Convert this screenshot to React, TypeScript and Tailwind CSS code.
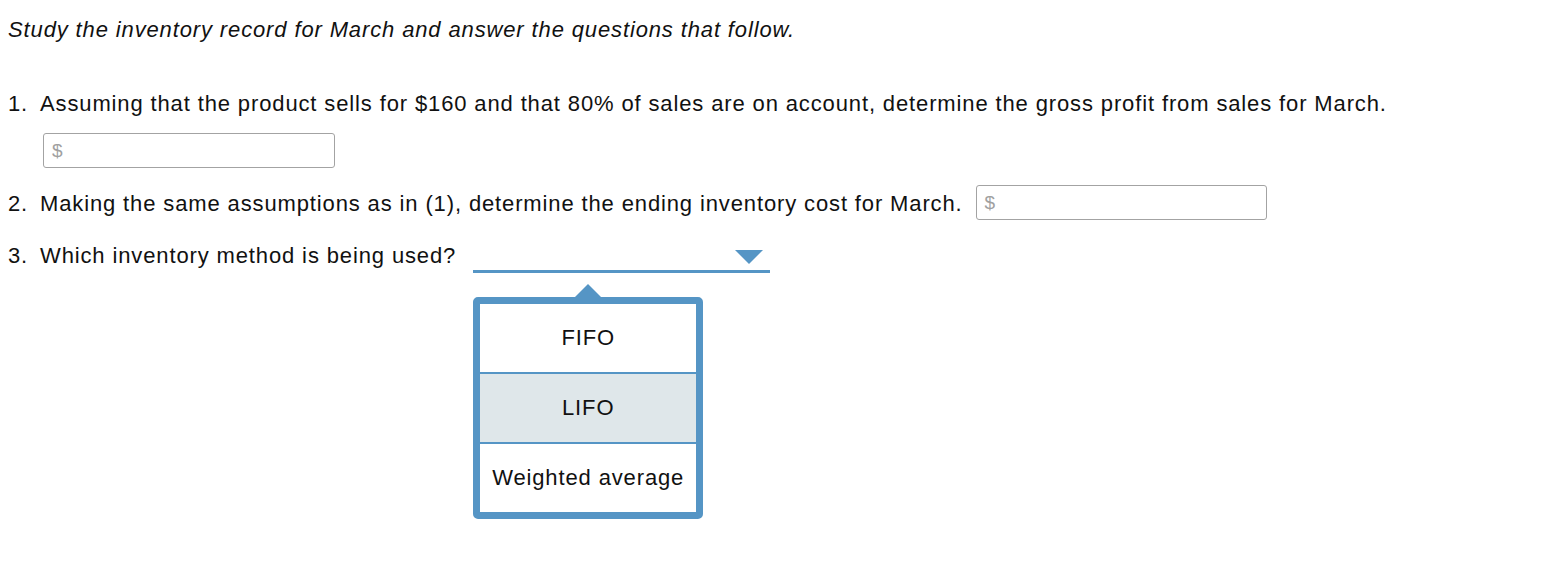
import React from "react";

const font = { fontFamily: '"Liberation Sans", Arial, Helvetica, sans-serif' };

function DollarInput({ w }: { w: string }) {
  return (
    <div className={`${w} h-[35px] border-[1.5px] border-[#a3a3a3] rounded-[3px] bg-white flex items-center pl-[8px] text-[19px] tracking-normal text-[#a0a0a0]`}>
      $
    </div>
  );
}

export default function App() {
  return (
    <div className="w-[1548px] h-[574px] bg-white text-[#111] text-[22px] leading-[26px] tracking-[0.87px]" style={font}>
      <div className="pl-[8px] pt-[17px]">
        <p className="italic">Study the inventory record for March and answer the questions that follow.</p>

        <div className="mt-[48px] flex">
          <span className="w-[32px]">1.</span>
          <span>Assuming that the product sells for $160 and that 80% of sales are on account, determine the gross profit from sales for March.</span>
        </div>
        <div className="mt-[16px] pl-[35px]">
          <DollarInput w="w-[292px]" />
        </div>

        <div className="mt-[17px] flex items-center h-[35px]">
          <span className="w-[32px] pt-[2px]">2.</span>
          <span className="pt-[2px]">Making the same assumptions as in (1), determine the ending inventory cost for March.</span>
          <div className="ml-[13px]">
            <DollarInput w="w-[291px]" />
          </div>
        </div>

        <div className="mt-[23px] flex items-start">
          <span className="w-[32px]">3.</span>
          <span>Which inventory method is being used?</span>
          <div className="relative ml-[17px] w-[297px] h-[30px] border-b-[3px] border-[#5595c5]">
            <div className="absolute right-[7px] top-[7px] w-0 h-0 border-l-[14px] border-r-[14px] border-t-[14px] border-l-transparent border-r-transparent border-t-[#5595c5]" />
            <div className="absolute left-0 top-[41px] w-[230px] tracking-[0.87px]">
              <div className="mx-auto w-0 h-0 border-l-[14px] border-r-[14px] border-b-[14px] border-l-transparent border-r-transparent border-b-[#5595c5] -mb-[1px]" />
              <div className="border-[7px] border-[#5595c5] rounded-[5px] bg-white overflow-hidden">
                <div className="h-[68px] flex items-center justify-center">FIFO</div>
                <div className="h-[72px] flex items-center justify-center bg-[#dfe7ea] border-t-[2px] border-b-[2px] border-[#5595c5]">LIFO</div>
                <div className="h-[68px] flex items-center justify-center">Weighted average</div>
              </div>
            </div>
          </div>
        </div>
      </div>
    </div>
  );
}
